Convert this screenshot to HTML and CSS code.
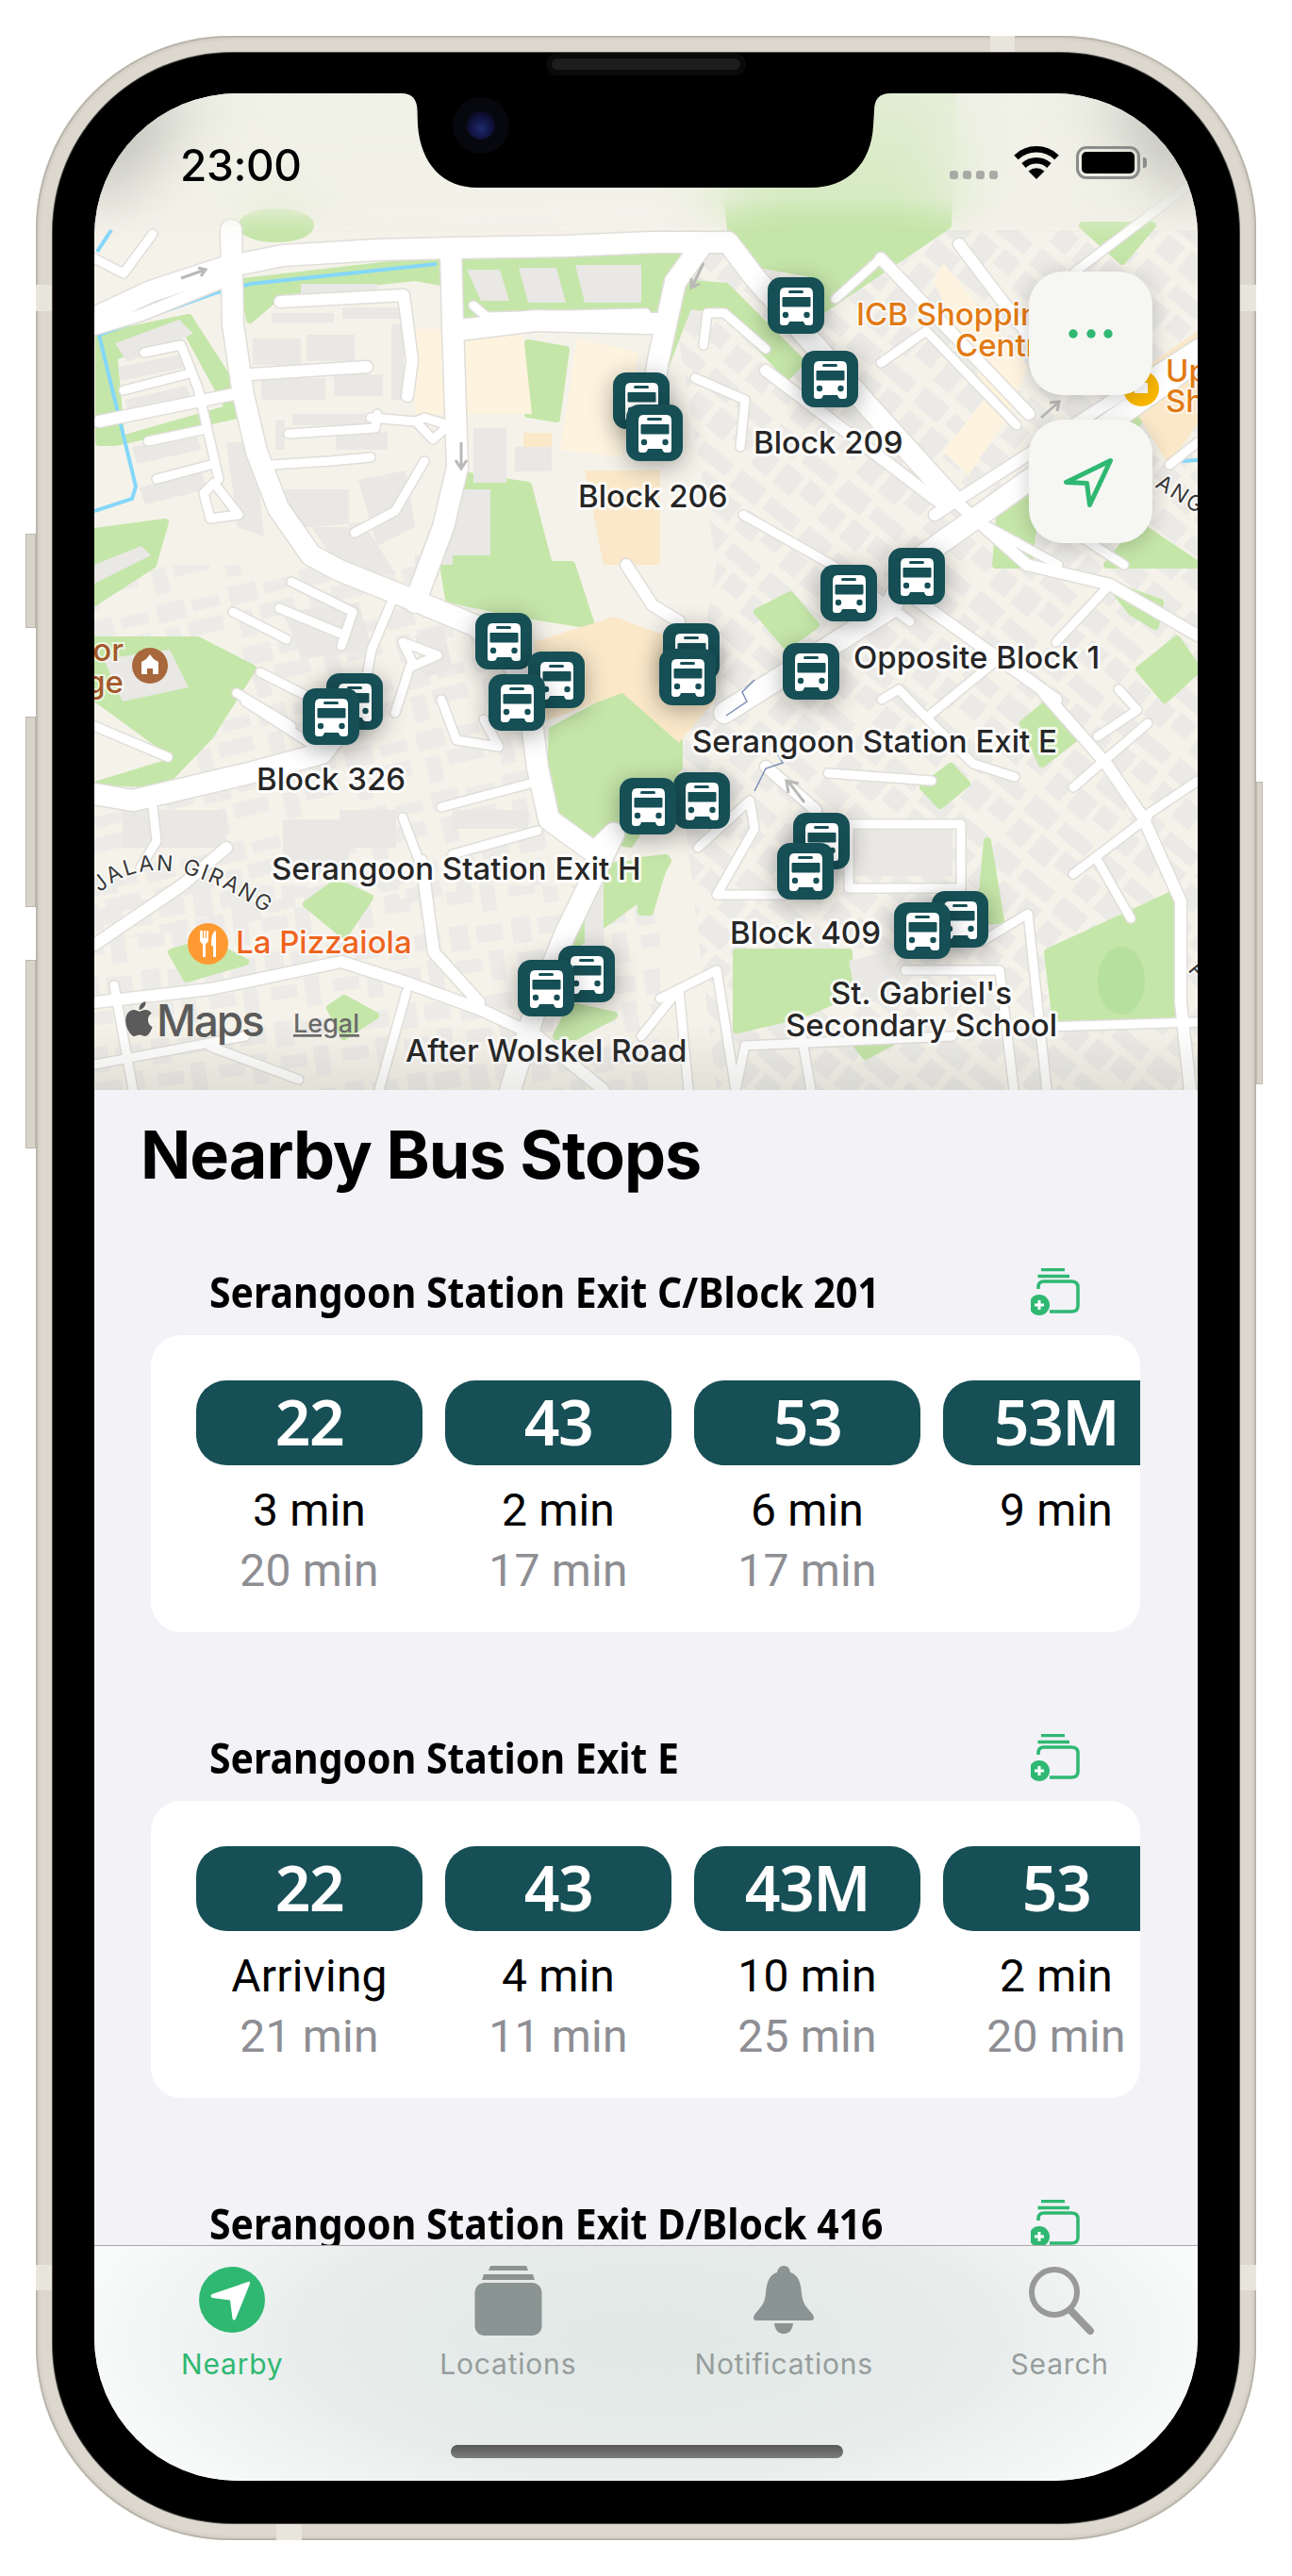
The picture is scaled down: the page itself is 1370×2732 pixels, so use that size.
FILE: index.html
```html
<!DOCTYPE html>
<html lang="en">
<head>
    <meta charset="UTF-8">
    <meta name="viewport" content="width=device-width, initial-scale=1.0">
    <title>Nearby Bus Stops</title>
    <link rel="stylesheet" href="styles.css">
</head>
<body>
    <div class="phone">
        <div class="side-btn mute"></div>
        <div class="side-btn vol-up"></div>
        <div class="side-btn vol-down"></div>
        <div class="side-btn power"></div>
        <div class="band band-top"></div>
        <div class="band band-left"></div>
        <div class="band band-right"></div>
        <div class="band band-left-low"></div>
        <div class="band band-right-low"></div>
        <div class="band band-bottom"></div>

        <div class="bezel">
            <div class="speaker"></div>
            <div class="screen">
                <!-- map: everything inside uses page coordinates -->
                <div class="map">
                    <svg class="map-svg" viewBox="100 100 1170 1057" xmlns="http://www.w3.org/2000/svg">
                        <defs>
                            <pattern id="blocks-right" width="92" height="64" patternUnits="userSpaceOnUse" patternTransform="rotate(40)">
                                <path fill="#ebeae6" d="M4 4H38V26H4ZM46 6H86V22H46ZM6 34H28V58H6ZM36 32H60V58H36ZM66 30H88V50H66Z"/>
                            </pattern>
                            <pattern id="blocks-left" width="78" height="66" patternUnits="userSpaceOnUse" patternTransform="rotate(-14)">
                                <path fill="#ecebe7" d="M4 4H34V24H4ZM42 8H72V20H42ZM8 32H24V60H8ZM32 30H70V46H32Z"/>
                            </pattern>
                            <pattern id="blocks-low" width="66" height="74" patternUnits="userSpaceOnUse" patternTransform="rotate(-8)">
                                <path fill="#ecebe7" d="M4 5H24V32H4ZM32 8H60V26H32ZM6 42H34V56H6ZM42 36H58V68H42Z"/>
                            </pattern>
                            <symbol id="bus" viewBox="0 0 60 60">
                                <rect width="60" height="60" rx="14" fill="#164f55"/>
                                <path fill="#fff" d="M18 11H43Q48 11 48 17V48Q48 51 45 51H42Q39 51 38 47H23Q22 51 19 51H16Q13 51 13 48V17Q13 11 18 11Z"/>
                                <rect x="15.500" y="21" width="30" height="10.500" rx="1" fill="#164f55"/>
                                <rect x="22" y="14" width="16" height="3" rx="1.500" fill="#164f55"/>
                                <circle cx="19" cy="40" r="3.200" fill="#164f55"/>
                                <circle cx="41.500" cy="40" r="3.200" fill="#164f55"/>
                            </symbol>
                            <path id="jalan" d="M106 948Q175 885 310 990"/>
                        </defs>

                        <rect x="100" y="100" width="1170" height="1057" fill="#f5f2ea"/>

                        <!-- housing texture -->
                        <path fill="url(#blocks-right)" d="M700 245H1270V1157H760L720 820 760 600Z"/>
                        <path fill="url(#blocks-left)" d="M100 600H480L590 780 580 940 100 1000Z"/>
                        <path fill="url(#blocks-low)" d="M100 940H700V1157H100Z"/>

                        <!-- parks -->
                        <g class="park">
                            <path d="M760 100H1010L1005 240 873 329 860 291 794 279 775 245Z"/>
                            <ellipse cx="293" cy="240" rx="36" ry="14"/>
                            <path d="M1148 240H1222L1190 278Z"/>
                            <path d="M488 278L700 262V340L488 344Z"/>
                            <path d="M258 300L465 276 468 300 440 295 300 310 265 340Z"/>
                            <path d="M105 358L200 338 240 400 255 440 122 470H105Z"/>
                            <path d="M100 565L175 555 162 600 100 640Z"/>
                            <path d="M490 505L560 516 582 600 606 600 627 664 540 650 476 636 470 600Z"/>
                            <path d="M560 365L600 372 590 445 560 440Z"/>
                            <path d="M586 775L660 736 720 785V814L668 896 610 885 582 857Z"/>
                            <path d="M643 920L708 914 692 943 610 1003 600 990Z"/>
                            <path d="M590 1100L606 1068 651 1078 610 1100Z"/>
                            <path d="M365 1060L398 1078 365 1100 350 1070Z"/>
                            <path d="M182 1011L219 1000 260 1021 198 1039Z"/>
                            <path d="M325 960L357 937 392 953 365 993Z"/>
                            <path d="M100 680H210L268 710 222 782 174 832 100 830Z"/>
                            <path d="M803 650L838 632 865 664 834 686Z"/>
                            <path d="M1085 768L1107 750 1142 782 1105 811Z"/>
                            <path d="M1208 711L1248 679 1270 711 1235 743Z"/>
                            <path d="M1177 621L1230 640 1225 665 1200 650Z"/>
                            <path d="M979 836L1008 814 1025 832 997 855Z"/>
                            <path d="M1111 1011L1243 950 1254 1075 1120 1086Z"/>
                            <path d="M1039 978L1047 893 1061 977Z"/>
                            <path d="M781 1011H900V1046L880 1064 847 1078 781 1093Z"/>
                            <path d="M909 1110L944 1107 918 1121Z"/>
                            <path d="M680 914L706 911 689 968H680Z"/>
                            <path d="M1060 551L1100 509 1091 600H1056Z"/>
                            <path d="M1174 600L1209 559 1270 600Z"/>
                            <path d="M1166 433L1210 444 1190 470Z"/>
                            <path d="M685 264L730 268 716 298 685 337Z"/>
                            <path d="M712 300L770 305 850 385 835 400 770 330 730 325 705 390 698 380Z"/>
                        </g>
                        <ellipse cx="1189" cy="1041" rx="25" ry="36" fill="#b6e09e"/>
                        <path fill="#f5f2ea" d="M125 382L195 355 237 432 132 462Z"/>
                        <path fill="#f5f2ea" d="M100 745L182 805 100 830Z"/>

                        <!-- malls and campus blocks -->
                        <g class="zone">
                            <path d="M489 360L555 356 564 440 494 440Z"/>
                            <path d="M612 360L677 375 660 486 594 478Z"/>
                            <path class="zone-deep" d="M566 682L651 655 720 680 759 743 720 789 660 736 580 765Z"/>
                            <path d="M1000 280L1090 390 1070 440 1027 505 1000 480 1048 420 990 300Z"/>
                            <path class="zone-deep" d="M1187 410L1270 352V450L1240 495Z"/>
                            <path d="M440 350H470L476 440H440Z"/>
                            <path class="zone-deep" d="M555 460H585V490H555Z"/>
                            <path class="zone-deep" d="M620 500H700V600H640Z"/>
                        </g>

                        <!-- canal -->
                        <polyline class="water" points="100,543 140,530 144,517 105,356 227,312 266,302 463,281"/>
                        <polyline class="water" points="118,245 103,268"/>
                        <polyline class="water" points="1253,490 1270,489"/>

                        <!-- larger buildings -->
                        <path class="bld" d="M319 302H400V312H319ZM288 333H354V343H288ZM363 327H426V339H363ZM415 345H428V425H415ZM268 360H319V388H268ZM325 356H376V384H325ZM277 402H345V425H277ZM354 398H406V421H354ZM310 440H389V452H310ZM292 447H302V478H292ZM356 459H411V478H356ZM502 455H537V513H502ZM546 475H585V501H546ZM125 390L197 376 200 390 128 405ZM132 425L198 410 203 425 137 440ZM140 475L208 460 213 478 145 493ZM148 518L214 502 220 520 154 536ZM495 287H530L540 320H510ZM550 285H590L600 322H560ZM610 282H680V322H620ZM122 365L190 340 205 355 135 385ZM100 600L150 580 160 590 100 620ZM240 470L252 560 280 570 270 470ZM380 510L430 500 440 560 400 580ZM470 520H520V590H470ZM300 520H370V560H300ZM440 590H480V600H440ZM330 560L365 610H420L385 555Z"/>
                        <path class="bld" d="M110 700L180 690 200 730 130 745ZM440 675L470 665 480 710 450 720ZM300 650L380 640 395 690 320 700ZM300 870H370V930H300ZM130 860H240V900H130ZM360 860H420V900H360ZM480 860H560V880H480ZM620 930H640V1000H620ZM860 880H1010V930H860ZM900 1020L940 1010 960 1050 910 1070Z"/>

                        <!-- road casing, then road fill -->
                        <g class="roads casing">
                            <use href="#roads-wide"/>
                            <use href="#roads-mid"/>
                            <use href="#roads-thin"/>
                        </g>
                        <g class="roads fill-road">
                            <use href="#roads-wide"/>
                            <use href="#roads-mid"/>
                            <use href="#roads-thin"/>
                        </g>

                        <!-- small details on the roads -->
                        <path class="oneway" d="M192 296L215 288M210 285L218 287 213 294"/>
                        <path class="oneway" d="M489 470V497M483 489L489 498 495 489"/>
                        <path class="oneway" d="M746 280L734 305M733 296L733 306 742 302"/>
                        <path class="oneway" d="M1104 444L1122 428M1113 428L1123 427 1121 437"/>
                        <path class="oneway" d="M853 852L836 830M836 842 834 829 847 832"/>
                        <path class="rail" d="M770 760L792 745 787 735 800 722M818 790L830 810 812 816 800 840"/>

                        <!-- far-off text under the pins -->
                        <circle cx="1210" cy="413" r="19" fill="#fbb800"/>
                        <rect x="1203" y="407" width="14" height="11" fill="#fff"/>
                        <text class="poi-orange" x="908" y="346">ICB Shopping</text>
                        <text class="poi-orange" x="1013" y="379">Centre</text>
                        <text class="poi-orange" x="1236" y="406">Up</text>
                        <text class="poi-orange" x="1236" y="438">Sh</text>
                        <text class="poi-brown" x="131" y="702" text-anchor="end">or</text>
                        <text class="poi-brown" x="131" y="736" text-anchor="end">ge</text>
                        <circle cx="159" cy="707" r="19" fill="#a8683c"/>
                        <path fill="#fff" d="M150 716V703L155 700 159 695 163 700 168 703V716H162V710H156V716Z"/>
                        <ellipse cx="220.500" cy="1002" rx="21.500" ry="22" fill="#ff9a33"/>
                        <path fill="#fff" d="M212 988V997Q212 1001 215 1002V1016H218V1002Q221 1001 221 997V988H219V996H218V988H216V996H215V988ZM229 988Q224 990 224 1001V1004H226V1016H229Z"/>
                        <text class="poi-red" x="250" y="1012">La Pizzaiola</text>
                        <text class="street"><textPath href="#jalan">JALAN GIRANG</textPath></text>
                        <text class="street" transform="translate(1224 517) rotate(32)">ANG</text>
                        <text class="street" transform="translate(1259 1030) rotate(50)">P</text>

                        <!-- stops -->
                        <g class="pins">
                            <use href="#bus" x="814" y="295" width="60" height="60"/>
                            <use href="#bus" x="850" y="373" width="60" height="60"/>
                            <use href="#bus" x="650" y="396" width="60" height="60"/>
                            <use href="#bus" x="664" y="430" width="60" height="60"/>
                            <use href="#bus" x="942" y="582" width="60" height="60"/>
                            <use href="#bus" x="870" y="600" width="60" height="60"/>
                            <use href="#bus" x="830" y="683" width="60" height="60"/>
                            <use href="#bus" x="703" y="662" width="60" height="60"/>
                            <use href="#bus" x="699" y="689" width="60" height="60"/>
                            <use href="#bus" x="714" y="820" width="60" height="60"/>
                            <use href="#bus" x="657" y="826" width="60" height="60"/>
                            <use href="#bus" x="841" y="863" width="60" height="60"/>
                            <use href="#bus" x="824" y="895" width="60" height="60"/>
                            <use href="#bus" x="988" y="946" width="60" height="60"/>
                            <use href="#bus" x="948" y="958" width="60" height="60"/>
                            <use href="#bus" x="346" y="715" width="60" height="60"/>
                            <use href="#bus" x="321" y="731" width="60" height="60"/>
                            <use href="#bus" x="504" y="651" width="60" height="60"/>
                            <use href="#bus" x="560" y="692" width="60" height="60"/>
                            <use href="#bus" x="518" y="716" width="60" height="60"/>
                            <use href="#bus" x="592" y="1004" width="60" height="60"/>
                            <use href="#bus" x="549" y="1019" width="60" height="60"/>
                        </g>

                        <!-- stop names -->
                        <text class="stop-name" x="799" y="482">Block 209</text>
                        <text class="stop-name" x="613" y="539">Block 206</text>
                        <text class="stop-name" x="905" y="710">Opposite Block 1</text>
                        <text class="stop-name" x="734" y="799">Serangoon Station Exit E</text>
                        <text class="stop-name" x="272" y="839">Block 326</text>
                        <text class="stop-name" x="288" y="934">Serangoon Station Exit H</text>
                        <text class="stop-name" x="774" y="1002">Block 409</text>
                        <text class="stop-name" x="977" y="1066" text-anchor="middle">St. Gabriel's</text>
                        <text class="stop-name" x="977" y="1100" text-anchor="middle">Secondary School</text>
                        <text class="stop-name" x="430" y="1127">After Wolskel Road</text>

                        <!-- attribution -->
                        <path class="apple" transform="translate(125 1057) scale(1.87 2.05)" d="M17.05 20.28c-.98.95-2.05.8-3.08.35-1.09-.46-2.09-.48-3.24 0-1.44.62-2.2.44-3.06-.35C2.79 15.25 3.51 7.59 9.05 7.31c1.35.07 2.29.74 3.08.8 1.18-.24 2.31-.93 3.57-.84 1.51.12 2.65.72 3.4 1.8-3.12 1.87-2.38 5.98.48 7.13-.57 1.5-1.31 2.99-2.54 4.09l.01-.01zM12.03 7.25c-.15-2.23 1.66-4.07 3.74-4.25.29 2.58-2.34 4.5-3.74 4.25z"/>
                        <text class="maps-word" x="166" y="1100">Maps</text>
                        <text class="legal" x="311" y="1096">Legal</text>

                        <!-- shared road shapes -->
                        <defs>
                            <g id="roads-wide">
                                <path d="M100 338L160 310 236 285 300 272 400 266 480 264 600 262 690 258 772 258 800 295 921 432 1008 528"/>
                                <path d="M245 245L247 345 258 420 272 480 295 540 330 590 360 606 435 636 505 665 558 720 570 815 582 870 630 905 651 885"/>
                                <path d="M651 885L600 990 570 1064 541 1157"/>
                                <path d="M478 264L480 344 485 497 470 560 440 640"/>
                                <path d="M480 352L568 341 685 344 700 344"/>
                                <path d="M100 843L141 850 264 821 341 800 358 778"/>
                                <path d="M965 600L1270 383"/>
                                <path d="M768 757L944 646 965 600"/>
                                <path d="M716 300L698 383 690 430"/>
                                <path d="M742 264L716 300"/>
                            </g>
                            <g id="roads-mid">
                                <path d="M100 350L150 335 236 300"/>
                                <path d="M100 1064L223 1050 362 1021 431 1043 508 1071 570 1100 640 1157"/>
                                <path d="M100 1003L194 939 240 900"/>
                                <path d="M447 914L460 1011 508 1064"/>
                                <path d="M1089 600L1177 621 1270 675"/>
                                <path d="M1107 736L1173 811 1212 868 1252 957 1252 1064 1262 1157"/>
                                <path d="M970 636L1120 743"/>
                                <path d="M812 814L865 860"/>
                                <path d="M105 448L258 417"/>
                                <path d="M266 398L389 390"/>
                                <path d="M297 321L428 314 437 383 432 421"/>
                                <path d="M812 394L999 536"/>
                                <path d="M934 275L1091 440"/>
                                <path d="M1017 260L1122 398"/>
                                <path d="M991 547L1270 367"/>
                                <path d="M1089 600L1008 528"/>
                                <path d="M664 600L692 643 720 660"/>
                            </g>
                            <g id="roads-thin">
                                <path d="M306 461L398 455 400 440"/>
                                <path d="M450 444L476 452 459 467 441 448Z"/>
                                <path d="M393 444L441 448"/>
                                <path d="M131 415L197 398"/>
                                <path d="M153 375L192 367 210 413 232 509"/>
                                <path d="M157 469L214 457"/>
                                <path d="M166 509L223 494"/>
                                <path d="M227 513L253 547 223 551 216 524Z"/>
                                <path d="M376 566L419 543 450 490"/>
                                <path d="M288 494L350 490 393 486"/>
                                <path d="M100 275L131 291 162 249"/>
                                <path d="M502 325L516 337 685 333"/>
                                <path d="M788 547L882 600 965 660"/>
                                <path d="M737 402L790 425 785 475"/>
                                <path d="M746 367L750 333 768 333 812 371"/>
                                <path d="M934 386L982 352 1078 452"/>
                                <path d="M886 318L934 275"/>
                                <path d="M1139 290L1270 190"/>
                                <path d="M1240 494L1270 470"/>
                                <path d="M1039 555L1122 600"/>
                                <path d="M1122 555L1192 600"/>
                                <path d="M427 868L447 921"/>
                                <path d="M468 857L562 832"/>
                                <path d="M480 907L570 882"/>
                                <path d="M904 875H1019V943H900V875"/>
                                <path d="M1138 928L1217 868"/>
                                <path d="M1164 914L1199 975"/>
                                <path d="M1040 1000L1090 970 1110 1157"/>
                                <path d="M960 1030H1060L1075 1157"/>
                                <path d="M415 640L394 690 385 740"/>
                                <path d="M260 745L330 790"/>
                                <path d="M100 1130L260 1100"/>
                                <path d="M700 1060L760 1030 780 1157"/>
                                <path d="M780 1157L790 1110 1010 1100"/>
                                <path d="M850 1100L860 1157"/>
                                <path d="M1110 1090L1270 1085"/>
                                <path d="M740 900L795 850 800 880 760 950H870"/>
                                <path d="M680 1100L720 1050 730 1157"/>
                                <path d="M935 743L953 732 984 764 1032 811 1076 825"/>
                                <path d="M984 761L1067 693"/>
                                <path d="M878 821L988 829"/>
                                <path d="M1138 836L1217 768"/>
                                <path d="M1186 732L1206 754 1164 782"/>
                                <path d="M1212 868L1270 829"/>
                                <path d="M1120 682L1177 621"/>
                                <path d="M276 714L325 739"/>
                                <path d="M251 736L309 771"/>
                                <path d="M296 646L366 675"/>
                                <path d="M247 650L304 679"/>
                                <path d="M309 618L374 650 362 686"/>
                                <path d="M427 682L464 696 439 707 427 682"/>
                                <path d="M435 707L419 757"/>
                                <path d="M468 743L484 786 529 793 513 764"/>
                                <path d="M100 771L178 804"/>
                                <path d="M162 857L166 893 149 921"/>
                                <path d="M121 1046L141 1157"/>
                                <path d="M431 1053L402 1157"/>
                                <path d="M223 1111L317 1146"/>
                            </g>
                        </defs>
                    </svg>
                    <div class="map-dim"></div>
                    <div class="map-btn more-btn">
                        <svg width="48" height="10" viewBox="0 0 48 10"><circle cx="5" cy="5" r="4.700"/><circle cx="24" cy="5" r="4.700"/><circle cx="42" cy="5" r="4.700"/></svg>
                    </div>
                    <div class="map-btn locate-btn">
                        <svg width="58" height="58" viewBox="0 0 58 58"><path d="M49.500 6.500L2.500 29.500 24.500 30.500 27.500 53.500Z"/></svg>
                    </div>
                </div>

                <div class="status-blur"></div>
                <div class="status-bar">
                    <span class="clock">23:00</span>
                    <div class="status-icons">
                        <div class="signal"><i></i><i></i><i></i><i></i></div>
                        <svg class="wifi" width="48" height="36" viewBox="0 0 48 36">
                            <path d="M2.500 13A31 31 0 0 1 45.500 13"/>
                            <path d="M10.500 21.500A20 20 0 0 1 37.500 21.500"/>
                            <path class="wifi-dot" d="M24 36L15.500 27.500Q24 21 32.500 27.500Z"/>
                        </svg>
                        <div class="battery"><div class="battery-fill"></div></div>
                        <div class="battery-nub"></div>
                    </div>
                </div>
                <svg class="notch" viewBox="0 0 540 110" width="540" height="110">
                    <path d="M16 0Q32 0 32.500 18L33 34C36 75 60 100 96 100H450C488 100 514 75 516 34L517 18Q517 0 534 0Z"/>
                </svg>
                <div class="camera"><div class="lens"></div></div>

                <main class="stops">
                    <h1 class="page-title">Nearby Bus Stops</h1>

                    <section class="stop">
                        <div class="stop-head">
                            <h2>Serangoon Station Exit C/Block 201</h2>
                            <svg class="add-icon" width="52" height="50" viewBox="0 0 52 50"><path class="line" d="M11 1.500H36M7.500 8.500H41"/><path class="line" d="M8 22V20Q8 14 14 14H43Q50 14 50 20V40Q50 46 43 46H20"/><circle cx="9" cy="39" r="11"/><path class="plus" d="M4 39H14M9 34V44"/></svg>
                        </div>
                        <div class="card">
                            <div class="arrivals">
                                <div class="bus"><div class="bus-no">22</div><div class="eta">3 min</div><div class="eta next">20 min</div></div>
                                <div class="bus"><div class="bus-no">43</div><div class="eta">2 min</div><div class="eta next">17 min</div></div>
                                <div class="bus"><div class="bus-no">53</div><div class="eta">6 min</div><div class="eta next">17 min</div></div>
                                <div class="bus"><div class="bus-no">53M</div><div class="eta">9 min</div><div class="eta next"></div></div>
                            </div>
                        </div>
                    </section>

                    <section class="stop">
                        <div class="stop-head">
                            <h2>Serangoon Station Exit E</h2>
                            <svg class="add-icon" width="52" height="50" viewBox="0 0 52 50"><path class="line" d="M11 1.500H36M7.500 8.500H41"/><path class="line" d="M8 22V20Q8 14 14 14H43Q50 14 50 20V40Q50 46 43 46H20"/><circle cx="9" cy="39" r="11"/><path class="plus" d="M4 39H14M9 34V44"/></svg>
                        </div>
                        <div class="card">
                            <div class="arrivals">
                                <div class="bus"><div class="bus-no">22</div><div class="eta">Arriving</div><div class="eta next">21 min</div></div>
                                <div class="bus"><div class="bus-no">43</div><div class="eta">4 min</div><div class="eta next">11 min</div></div>
                                <div class="bus"><div class="bus-no">43M</div><div class="eta">10 min</div><div class="eta next">25 min</div></div>
                                <div class="bus"><div class="bus-no">53</div><div class="eta">2 min</div><div class="eta next">20 min</div></div>
                            </div>
                        </div>
                    </section>

                    <section class="stop">
                        <div class="stop-head">
                            <h2>Serangoon Station Exit D/Block 416</h2>
                            <svg class="add-icon" width="52" height="50" viewBox="0 0 52 50"><path class="line" d="M11 1.500H36M7.500 8.500H41"/><path class="line" d="M8 22V20Q8 14 14 14H43Q50 14 50 20V40Q50 46 43 46H20"/><circle cx="9" cy="39" r="11"/><path class="plus" d="M4 39H14M9 34V44"/></svg>
                        </div>
                    </section>
                </main>

                <nav class="tabbar">
                    <div class="tab active">
                        <svg width="76" height="76" viewBox="0 0 76 76"><circle cx="38" cy="38" r="35" fill="#2fb872"/><path fill="#fff" d="M55 19Q57.500 18 57 21L42 58Q40 61.500 38.500 58L36 38.500 17 36Q14 34 17 32Z"/></svg>
                        <span>Nearby</span>
                    </div>
                    <div class="tab">
                        <svg width="76" height="76" viewBox="0 0 76 76"><path class="tab-shape" d="M19 2H57L59 7H17ZM12 11H64L66 17H10Z"/><rect class="tab-shape" x="2.500" y="20" width="71" height="56" rx="10"/></svg>
                        <span>Locations</span>
                    </div>
                    <div class="tab">
                        <svg width="76" height="76" viewBox="0 0 76 76"><path class="tab-shape" d="M38 2Q44 2 45 9C54 12 56 20 57 31 58 44 64 47 69 54 71 58 70 60 66 60H10C6 60 5 58 7 54 12 47 18 44 19 31 20 20 22 12 31 9 32 2 38 2 38 2ZM28 63H48C47 72 42 74 38 74 34 74 29 72 28 63Z"/></svg>
                        <span>Notifications</span>
                    </div>
                    <div class="tab">
                        <svg class="search" width="76" height="76" viewBox="0 0 76 76"><circle cx="32" cy="30" r="24"/><path d="M49 49L70 71"/></svg>
                        <span>Search</span>
                    </div>
                    <div class="home-bar"></div>
                </nav>
            </div>
        </div>
    </div>
</body>
</html>
```

FILE: styles.css
```css
body {
    margin: 0;
    padding: 38px;
    background: #fff;
    font-family: Inter, "Liberation Sans", sans-serif;
}
.phone {
    position: relative;
    width: 1294px;
    height: 2656px;
    box-sizing: border-box;
    padding: 18px;
    border-radius: 206px;
    background: #dcd8ce;
    box-shadow: inset 0 0 0 2px #bab6ac, inset 0 0 0 5px #d6d2c7;
}
.side-btn {
    position: absolute;
    background: #d8d4ca;
    box-shadow: inset 0 0 0 1px #bdb9af;
}
.mute { left: -11px; top: 528px; width: 11px; height: 100px; }
.vol-up { left: -11px; top: 722px; width: 11px; height: 202px; }
.vol-down { left: -11px; top: 980px; width: 11px; height: 200px; }
.power { right: -7px; top: 791px; width: 7px; height: 321px; }
.band {
    position: absolute;
    background: #e8e5dd;
}
.band-top { left: 1012px; top: 0; width: 26px; height: 18px; }
.band-left { left: 0; top: 264px; width: 18px; height: 28px; }
.band-right { right: 0; top: 264px; width: 18px; height: 28px; }
.band-left-low { left: 0; top: 2364px; width: 18px; height: 27px; }
.band-right-low { right: 0; top: 2364px; width: 18px; height: 27px; }
.band-bottom { left: 255px; bottom: 0; width: 27px; height: 18px; }

.bezel {
    position: relative;
    box-sizing: border-box;
    width: 1258px;
    height: 2620px;
    padding: 43px 44px 44px;
    border-radius: 190px;
    background: #000;
    box-shadow: 0 0 0 1px #4b4b48;
}
.speaker {
    position: absolute;
    left: 529px;
    top: 6px;
    width: 200px;
    height: 12px;
    border-radius: 6px;
    background: #1d1d1d;
    box-shadow: 0 0 0 6px #0a0a0a;
}
.screen {
    position: relative;
    display: flex;
    flex-direction: column;
    width: 1170px;
    height: 2532px;
    border-radius: 152px;
    overflow: hidden;
    background: #f2f2f7;
}

/* map */
.map {
    position: relative;
    flex: 0 0 1057px;
    overflow: hidden;
}
.map-svg {
    display: block;
    width: 1170px;
    height: 1057px;
}
.map-dim {
    position: absolute;
    left: 0;
    right: 0;
    bottom: 0;
    height: 70px;
    background: linear-gradient(rgba(90, 90, 80, 0), rgba(90, 90, 80, .12));
}
.park {
    fill: #c5e6a9;
    stroke: #c5e6a9;
    stroke-width: 8;
    stroke-linejoin: round;
}
.zone { fill: #fdf3df; }
.zone-deep { fill: #fae8c9; }
.water {
    fill: none;
    stroke: #84d7fa;
    stroke-width: 4;
}
.bld { fill: #e9e8e4; }
.roads {
    fill: none;
    stroke-linecap: round;
    stroke-linejoin: round;
}
.casing { stroke: #e0ded9; }
.fill-road { stroke: #fff; }
.casing use[href="#roads-wide"] { stroke-width: 25; }
.casing use[href="#roads-mid"] { stroke-width: 15; }
.casing use[href="#roads-thin"] { stroke-width: 12; }
.fill-road use[href="#roads-wide"] { stroke-width: 22; }
.fill-road use[href="#roads-mid"] { stroke-width: 12; }
.fill-road use[href="#roads-thin"] { stroke-width: 9; }
.oneway {
    fill: none;
    stroke: #b9b9b7;
    stroke-width: 3;
}
.rail {
    fill: none;
    stroke: #7c8db8;
    stroke-width: 1.500;
}
.pins use { filter: drop-shadow(0 5px 12px rgba(0, 0, 0, .32)); }
.stop-name {
    font: 500 33px Inter, sans-serif;
    fill: #262626;
    stroke: #fff;
    stroke-width: 6px;
    stroke-opacity: .85;
    stroke-linejoin: round;
    paint-order: stroke;
}
.poi-orange, .poi-brown, .poi-red {
    font: 500 33px Inter, sans-serif;
    stroke: #fff;
    stroke-width: 4px;
    stroke-opacity: .7;
    paint-order: stroke;
}
.poi-orange { fill: #e27a12; }
.poi-brown { fill: #a5592b; }
.poi-red { fill: #ef641e; }
.street {
    font: 400 23px Inter, sans-serif;
    letter-spacing: 2px;
    fill: #3a3a3a;
    stroke: #fff;
    stroke-width: 3px;
    paint-order: stroke;
}
.apple { fill: #5b5b5b; }
.maps-word {
    font: 500 46px Inter, sans-serif;
    letter-spacing: -2.200px;
    fill: #5b5b5b;
}
.legal {
    font: 500 27px Inter, sans-serif;
    fill: #6a6a6a;
    text-decoration: underline;
}
.map-btn {
    position: absolute;
    left: 991px;
    display: flex;
    align-items: center;
    justify-content: center;
    width: 131px;
    height: 131px;
    border-radius: 36px;
    background: #f6f6f3;
    box-shadow: 0 4px 22px rgba(0, 0, 0, .2);
}
.more-btn { top: 189px; }
.locate-btn { top: 346px; }
.more-btn circle { fill: #2fb872; }
.locate-btn path {
    fill: none;
    stroke: #2fb872;
    stroke-width: 5px;
    stroke-linejoin: round;
}

/* status bar */
.status-blur {
    position: absolute;
    left: 0;
    right: 0;
    top: 0;
    height: 155px;
    backdrop-filter: blur(36px);
    background: linear-gradient(rgba(238, 240, 230, .7), rgba(238, 240, 230, .3));
    -webkit-mask-image: linear-gradient(#000 72%, transparent);
    mask-image: linear-gradient(#000 72%, transparent);
}
.status-bar {
    position: absolute;
    left: 0;
    right: 0;
    top: 0;
    height: 100px;
}
.clock {
    position: absolute;
    left: 91px;
    top: 51px;
    font-size: 46px;
    font-weight: 500;
    line-height: 50px;
    letter-spacing: -.4px;
    color: #000;
}
.status-icons {
    position: absolute;
    left: 907px;
    top: 55px;
    display: flex;
    align-items: flex-end;
}
.signal {
    display: flex;
    gap: 5px;
    margin-right: 17px;
}
.signal i {
    display: block;
    width: 9px;
    height: 9px;
    border-radius: 3px;
    background: #a9aaa6;
}
.wifi path {
    fill: none;
    stroke: #000;
    stroke-width: 6.500px;
}
.wifi .wifi-dot {
    fill: #000;
    stroke: none;
}
.battery {
    box-sizing: border-box;
    width: 68px;
    height: 35px;
    margin-left: 18px;
    padding: 3px;
    border: 3px solid #8b8b89;
    border-radius: 11px;
}
.battery-fill {
    height: 100%;
    border-radius: 5px;
    background: #000;
}
.battery-nub {
    width: 4px;
    height: 11px;
    margin: 0 0 12px 3px;
    border-radius: 0 3px 3px 0;
    background: #8b8b89;
}
.notch {
    position: absolute;
    left: 310px;
    top: 0;
    display: block;
}
.notch path { fill: #000; }
.camera {
    position: absolute;
    left: 380px;
    top: 4px;
    display: flex;
    align-items: center;
    justify-content: center;
    width: 60px;
    height: 60px;
    border-radius: 50%;
    background: #07070e;
}
.lens {
    width: 30px;
    height: 30px;
    border-radius: 50%;
    background: radial-gradient(circle at 50% 60%, #1e2a70, #0e1036 55%, #070716);
}

/* list */
.stops {
    flex: 1;
    overflow: hidden;
}
.page-title {
    margin: 0;
    padding: 27px 0 0 49px;
    font-size: 70px;
    font-weight: 700;
    line-height: 84px;
    letter-spacing: -1px;
    color: #000;
}
.stop { margin-top: 49px; }
.stop + .stop { margin-top: 79px; }
.stop-head {
    display: flex;
    align-items: flex-end;
    justify-content: space-between;
    height: 100px;
    padding: 0 125px 21px 122px;
    box-sizing: border-box;
}
.stop-head h2 {
    margin: 0;
    font-family: "Noto Sans", "Open Sans", sans-serif;
    font-size: 45px;
    font-weight: 700;
    line-height: 50px;
    color: #000;
    transform: scaleX(.91);
    transform-origin: left center;
    white-space: nowrap;
}
.add-icon { flex: none; }
.add-icon .line {
    fill: none;
    stroke: #2fb872;
    stroke-width: 3.500px;
}
.add-icon circle { fill: #2fb872; }
.add-icon .plus {
    fill: none;
    stroke: #fff;
    stroke-width: 3px;
}
.card {
    margin-left: 60px;
    width: 1049px;
    height: 315px;
    box-sizing: border-box;
    padding: 48px 0 0 48px;
    border-radius: 32px;
    background: #fff;
    overflow: hidden;
}
.arrivals {
    display: flex;
    gap: 24px;
}
.bus {
    flex: 0 0 240px;
    text-align: center;
}
.bus-no {
    height: 90px;
    margin-bottom: 16px;
    border-radius: 32px;
    background: #164f55;
    font-family: "Noto Sans", "Open Sans", sans-serif;
    font-size: 66px;
    font-weight: 600;
    line-height: 86px;
    letter-spacing: -1.500px;
    color: #fff;
}
.eta {
    height: 64px;
    font-family: Roboto, sans-serif;
    font-size: 48px;
    line-height: 64px;
    letter-spacing: .2px;
    color: #000;
}
.eta.next { color: #8e8e93; }

/* tab bar */
.tabbar {
    position: relative;
    flex: 0 0 250px;
    display: grid;
    grid-template-columns: repeat(4, 1fr);
    box-sizing: border-box;
    padding-top: 19px;
    border-top: 1px solid #a9a9a9;
    background: radial-gradient(ellipse 52% 95% at 50% 40%, #e1e8e6, #e8edec 60%, #f9fafa);
}
.tab {
    display: flex;
    flex-direction: column;
    align-items: center;
    font-size: 30px;
    line-height: 36px;
    letter-spacing: .8px;
    color: #969d9c;
}
.tab svg { display: block; margin-bottom: 12px; }
.tab-shape { fill: #8a9493; }
.tab.active { color: #2fb872; }
.search { fill: none; }
.search circle, .search path {
    stroke: #999;
    stroke-width: 6px;
}
.search path { stroke-linecap: round; stroke-width: 8px; }
.home-bar {
    position: absolute;
    left: 378px;
    top: 211px;
    width: 416px;
    height: 14px;
    border-radius: 7px;
    background: linear-gradient(#585858, #7c7c7c);
}
```
